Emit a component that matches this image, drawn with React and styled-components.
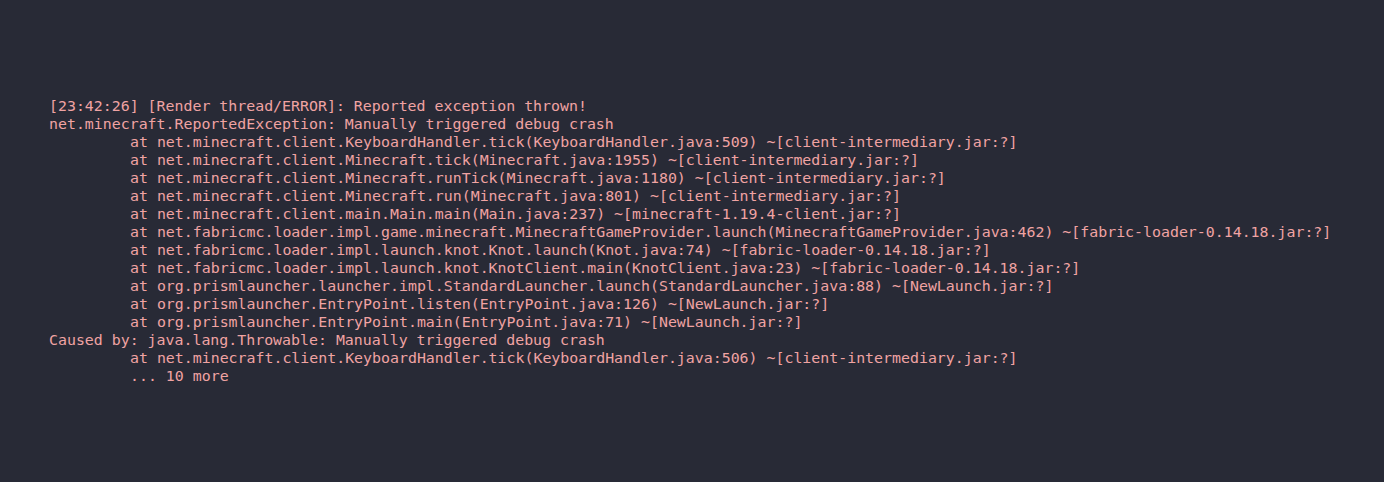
import React from "react";
import styled, { createGlobalStyle } from "styled-components";

const Global = createGlobalStyle`
  html, body { margin: 0; padding: 0; background: #282a36; }
  #root { height: 100vh; }
`;

const Screen = styled.div`
  height: 482px;
  box-sizing: border-box;
  display: flex;
  flex-direction: column;
  justify-content: center;
  padding-left: 49px;
  background: #282a36;
`;

const Log = styled.div`
  font-family: "DejaVu Sans Mono", monospace;
  font-size: 14.9px;
  line-height: 18px;
  color: #f0a3a3;
  white-space: pre;
`;

const Line = styled.div`
  padding-left: ${(p) => (p.$indent ? "81px" : "0")};
`;

const lines = [
  ["[23:42:26] [Render thread/ERROR]: Reported exception thrown!", false],
  ["net.minecraft.ReportedException: Manually triggered debug crash", false],
  ["at net.minecraft.client.KeyboardHandler.tick(KeyboardHandler.java:509) ~[client-intermediary.jar:?]", true],
  ["at net.minecraft.client.Minecraft.tick(Minecraft.java:1955) ~[client-intermediary.jar:?]", true],
  ["at net.minecraft.client.Minecraft.runTick(Minecraft.java:1180) ~[client-intermediary.jar:?]", true],
  ["at net.minecraft.client.Minecraft.run(Minecraft.java:801) ~[client-intermediary.jar:?]", true],
  ["at net.minecraft.client.main.Main.main(Main.java:237) ~[minecraft-1.19.4-client.jar:?]", true],
  ["at net.fabricmc.loader.impl.game.minecraft.MinecraftGameProvider.launch(MinecraftGameProvider.java:462) ~[fabric-loader-0.14.18.jar:?]", true],
  ["at net.fabricmc.loader.impl.launch.knot.Knot.launch(Knot.java:74) ~[fabric-loader-0.14.18.jar:?]", true],
  ["at net.fabricmc.loader.impl.launch.knot.KnotClient.main(KnotClient.java:23) ~[fabric-loader-0.14.18.jar:?]", true],
  ["at org.prismlauncher.launcher.impl.StandardLauncher.launch(StandardLauncher.java:88) ~[NewLaunch.jar:?]", true],
  ["at org.prismlauncher.EntryPoint.listen(EntryPoint.java:126) ~[NewLaunch.jar:?]", true],
  ["at org.prismlauncher.EntryPoint.main(EntryPoint.java:71) ~[NewLaunch.jar:?]", true],
  ["Caused by: java.lang.Throwable: Manually triggered debug crash", false],
  ["at net.minecraft.client.KeyboardHandler.tick(KeyboardHandler.java:506) ~[client-intermediary.jar:?]", true],
  ["... 10 more", true],
];

export default function App() {
  return (
    <>
      <Global />
      <Screen>
        <Log>
          {lines.map(([text, indent], i) => (
            <Line key={i} $indent={indent}>
              {text}
            </Line>
          ))}
        </Log>
      </Screen>
    </>
  );
}
